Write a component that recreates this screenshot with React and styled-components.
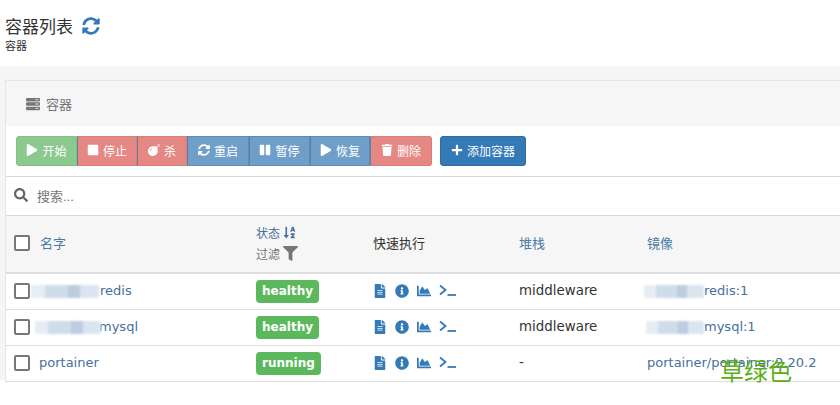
import React from "react";
import styled, { createGlobalStyle } from "styled-components";
import {
  FaPlay, FaStop, FaBomb, FaSyncAlt, FaPause, FaTrash, FaPlus, FaSearch,
  FaFilter, FaSortAlphaDown, FaFileAlt, FaInfoCircle, FaChartArea, FaServer,
} from "react-icons/fa";

const cjk = `"Liberation Sans", "Noto Sans CJK SC", sans-serif`;
const latin = `"DejaVu Sans", "Noto Sans CJK SC", sans-serif`;

const GlobalStyle = createGlobalStyle`
  html, body { margin: 0; padding: 0; background: #fff; overflow: hidden; }
  body { font-family: ${cjk}; color: #333; }
`;

const Page = styled.div`
  position: relative;
  width: 840px;
  height: 405px;
  overflow: hidden;
`;

const Header = styled.header`
  height: 66px;
  box-sizing: border-box;
  padding: 15px 0 0 5px;
`;

const TitleRow = styled.div`
  display: flex;
  align-items: center;
  gap: 9px;
  height: 20px;
  font-size: 17px;
  color: #333;
  svg { color: #337ab7; font-size: 18px; margin-top: 1px; }
`;

const Subtitle = styled.div`
  font-size: 11px;
  line-height: 14px;
  margin-top: 4px;
  color: #333;
`;

const Content = styled.main`
  background: #f5f5f5;
  height: 314px;
  box-sizing: border-box;
  padding: 14px 0 0 5px;
`;

const Widget = styled.section`
  width: 860px;
  background: #fff;
  border: 1px solid #e6e6e6;
  border-right: none;
  border-bottom: none;
  box-sizing: border-box;
`;

const WidgetTitle = styled.div`
  height: 45px;
  background: #f6f6f6;
  display: flex;
  align-items: center;
  gap: 6px;
  padding-left: 20px;
  font-size: 13px;
  color: #767676;
`;

const Toolbar = styled.div`
  height: 51px;
  box-sizing: border-box;
  padding-top: 10px;
  display: flex;
  padding-left: 10px;
  border-bottom: 1px solid #d9d9d9;
`;

const ButtonGroup = styled.div`
  display: flex;
  margin-right: 8px;
  button:first-child { border-radius: 3px 0 0 3px; }
  button:last-child { border-radius: 0 3px 3px 0; }
`;

const palette = {
  green: ["#8cc98e", "#82c184"],
  red: ["#e58783", "#dc7d79"],
  blue: ["#6f9fc9", "#5b8db8"],
  solid: ["#337ab7", "#2e6da4"],
};

const Button = styled.button`
  height: 30px;
  box-sizing: border-box;
  width: ${(p) => p.$w}px;
  padding: 0 0 2px;
  display: flex;
  align-items: center;
  justify-content: center;
  gap: 4px;
  font-family: ${cjk};
  font-size: 12px;
  color: #fff;
  background: ${(p) => palette[p.$tone][0]};
  border: 1px solid ${(p) => palette[p.$tone][1]};
  border-left-color: ${(p) => (p.$tone === "green" ? palette.green[1] : "#5f7f9f")};
  border-radius: 0;
  svg { font-size: 12px; }
`;

const SolidButton = styled(Button)`
  border-radius: 3px;
  border-color: ${palette.solid[1]};
  font-size: 12px;
`;

const SearchBar = styled.div`
  height: 39px;
  box-sizing: border-box;
  padding: 0 0 2px 8px;
  display: flex;
  align-items: center;
  gap: 9px;
  font-size: 13px;
  color: #767676;
  border-bottom: 1px solid #d9d9d9;
  svg { font-size: 14px; color: #666; }
`;

const Table = styled.div`
  font-size: 13px;
`;

const grid = `
  display: grid;
  grid-template-columns: 250px 117px 146px 128px 1fr;
  align-items: center;
`;

const HeadRow = styled.div`
  ${grid}
  height: 58px;
  box-sizing: border-box;
  padding-bottom: 2px;
  background: #f6f6f6;
  border-bottom: 2px solid #dedede;
`;

const Row = styled.div`
  ${grid}
  height: 36px;
  box-sizing: border-box;
  padding-bottom: 2px;
  border-bottom: 1px solid #dedede;
  font-family: ${latin};
`;

const NameCell = styled.div`
  display: flex;
  align-items: center;
  gap: ${(p) => p.$gap || 9}px;
  padding-left: 8px;
`;

const Check = styled.span`
  width: 16px;
  height: 16px;
  box-sizing: border-box;
  border: 2px solid #777;
  border-radius: 2px;
  background: #fff;
  flex: none;
`;

const Link = styled.span`
  color: #4a7ba6;
  padding-bottom: 2px;
`;

const HeadLabel = styled.div`
  padding-bottom: 2px;
`;

const DataLink = styled.span`
  color: #45709b;
  font-size: 13px;
  margin-left: ${(p) => p.$offset || 0}px;
  white-space: nowrap;
`;

const StatusHead = styled.div`
  display: flex;
  flex-direction: column;
  gap: 4px;
  font-size: 12px;
  color: #767676;
`;

const HeadLine = styled.div`
  display: flex;
  align-items: center;
  gap: 3px;
  color: ${(p) => (p.$link ? "#45709b" : "#767676")};
  svg { font-size: ${(p) => (p.$link ? 13 : 15)}px; }
`;

const Badge = styled.span`
  justify-self: start;
  margin-top: 2px;
  background: #5cb85c;
  color: #fff;
  font-family: ${latin};
  font-weight: 700;
  font-size: 12px;
  line-height: 23px;
  padding: 0 6px;
  border-radius: 4px;
`;

const Actions = styled.div`
  display: flex;
  align-items: center;
  gap: 8px;
  color: #337ab7;
  font-size: 14px;
`;

const Dark = styled.span`
  color: #333;
  font-size: 13.4px;
`;

const Blur = styled.span`
  position: absolute;
  left: ${(p) => p.$x}px;
  top: ${(p) => p.$y}px;
  width: ${(p) => p.$w}px;
  height: 13px;
  background: linear-gradient(90deg, #e6edf4 0 20%, #cfdde9 20% 55%, #bccde0 55% 72%, #dbe5ef 72% 100%);
  filter: blur(1px);
`;

const Watermark = styled.div`
  position: absolute;
  left: 720px;
  top: 356px;
  font-size: 24px;
  line-height: 28px;
  color: #5cae18;
  font-family: "Noto Sans CJK SC", sans-serif;
`;

function Prompt() {
  return (
    <svg width="18" height="13" viewBox="0 0 18 13" fill="none" stroke="#337ab7" strokeWidth="1.8">
      <path d="M1 1.5 L6.5 6 L1 10.5" />
      <path d="M8.5 11 H17" />
    </svg>
  );
}

const rows = [
  { name: "redis", status: "healthy", stack: "middleware", image: "redis:1", nameOffset: 61, imageOffset: 57 },
  { name: "mysql", status: "healthy", stack: "middleware", image: "mysql:1", nameOffset: 60, imageOffset: 57 },
  { name: "portainer", status: "running", stack: "-", image: "portainer/portainer:2.20.2", nameOffset: 0, imageOffset: 0 },
];

export default function App() {
  return (
    <Page>
      <GlobalStyle />
      <Header>
        <TitleRow>容器列表 <FaSyncAlt /></TitleRow>
        <Subtitle>容器</Subtitle>
      </Header>
      <Content>
        <Widget>
          <WidgetTitle><FaServer size={14} />容器</WidgetTitle>
          <Toolbar>
            <ButtonGroup>
              <Button $tone="green" $w={61}><FaPlay />开始</Button>
              <Button $tone="red" $w={60}><FaStop />停止</Button>
              <Button $tone="red" $w={50}><FaBomb />杀</Button>
              <Button $tone="blue" $w={62}><FaSyncAlt />重启</Button>
              <Button $tone="blue" $w={61}><FaPause />暂停</Button>
              <Button $tone="blue" $w={60}><FaPlay />恢复</Button>
              <Button $tone="red" $w={62}><FaTrash />删除</Button>
            </ButtonGroup>
            <SolidButton $tone="solid" $w={86}><FaPlus />添加容器</SolidButton>
          </Toolbar>
          <SearchBar><FaSearch />搜索...</SearchBar>
          <Table>
            <HeadRow>
              <NameCell $gap={10}><Check /><Link>名字</Link></NameCell>
              <StatusHead>
                <HeadLine $link>状态 <FaSortAlphaDown /></HeadLine>
                <HeadLine>过滤 <FaFilter /></HeadLine>
              </StatusHead>
              <HeadLabel>快速执行</HeadLabel>
              <Link>堆栈</Link>
              <Link>镜像</Link>
            </HeadRow>
            {rows.map((r) => (
              <Row key={r.name}>
                <NameCell><Check /><DataLink $offset={r.nameOffset}>{r.name}</DataLink></NameCell>
                <Badge>{r.status}</Badge>
                <Actions><FaFileAlt /><FaInfoCircle /><FaChartArea /><Prompt /></Actions>
                <Dark>{r.stack}</Dark>
                <DataLink $offset={r.imageOffset}>{r.image}</DataLink>
              </Row>
            ))}
          </Table>
        </Widget>
      </Content>
      <Blur $x={31} $y={285} $w={68} />
      <Blur $x={35} $y={321} $w={66} />
      <Blur $x={644} $y={285} $w={60} />
      <Blur $x={646} $y={321} $w={58} />
      <Watermark>草绿色</Watermark>
    </Page>
  );
}
